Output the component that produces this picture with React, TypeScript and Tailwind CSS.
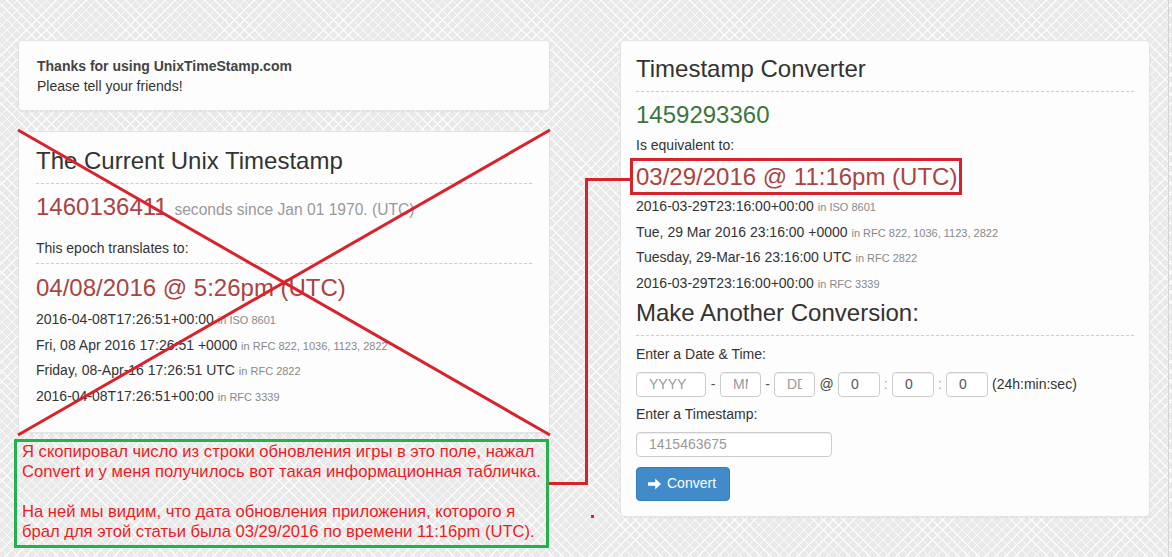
import React from "react";

const sans = "font-['Liberation_Sans',Arial,sans-serif]";

function Card({ className = "", children }: { className?: string; children: React.ReactNode }) {
  return (
    <div
      className={`rounded-[4px] border border-[#e4e4e4] bg-[#fdfdfd] shadow-[0_1px_2px_rgba(0,0,0,0.05)] ${className}`}
    >
      {children}
    </div>
  );
}

function FormatLine({ value, label }: { value: string; label: string }) {
  return (
    <div className="text-[14px] leading-[24.67px] text-[#333] whitespace-nowrap">
      {value} <span className="text-[11px] text-[#888]">in {label}</span>
    </div>
  );
}

function ArrowRight() {
  return (
    <svg width="14" height="14" viewBox="0 0 14 14" className="fill-white">
      <path d="M0 5.2h7.2V1.6L13 7l-5.8 5.4V8.8H0z" />
    </svg>
  );
}

function Field({ width, placeholder, value }: { width: string; placeholder?: string; value?: string }) {
  return (
    <input
      readOnly
      value={value}
      placeholder={placeholder}
      className={`${width} h-[25px] rounded-[4px] border border-[#ccc] bg-white px-[12px] text-[14px] text-[#555] shadow-[inset_0_1px_1px_rgba(0,0,0,0.075)] outline-none placeholder:text-[#999]`}
    />
  );
}

export default function App() {
  return (
    <div
      className={`relative h-[557px] w-[1172px] overflow-hidden bg-[#e9e9e9] [background-image:repeating-linear-gradient(45deg,transparent_0,transparent_6px,rgba(255,255,255,0.8)_6px,rgba(255,255,255,0.8)_7px),repeating-linear-gradient(-45deg,transparent_0,transparent_6px,rgba(255,255,255,0.8)_6px,rgba(255,255,255,0.8)_7px)] ${sans}`}
    >
      <div className="flex pl-[18px] pt-[40px]">
        {/* left column */}
        <div className="w-[532px]">
          <Card className="h-[71px] px-[18px] pt-[15px]">
            <div className="text-[14px] font-bold leading-[20px] text-[#444]">Thanks for using UnixTimeStamp.com</div>
            <div className="text-[14px] leading-[20px] text-[#333]">Please tell your friends!</div>
          </Card>

          <Card className="mt-[20px] h-[302px] px-[17px] pt-[16px]">
            <div className="border-b border-dashed border-[#ccc] pb-[9px] text-[24px] leading-[26px] text-[#333]">
              The Current Unix Timestamp
            </div>
            <div className="mt-[10px] whitespace-nowrap text-[24px] leading-[26px] text-[#a94442]">
              1460136411 <span className="text-[15.6px] text-[#999]">seconds since Jan 01 1970. (UTC)</span>
            </div>
            <div className="mt-[15px] border-b border-dashed border-[#ccc] pb-[5px] text-[14px] leading-[20px] text-[#333]">
              This epoch translates to:
            </div>
            <div className="mt-[11px] text-[24px] leading-[26px] text-[#a94442]">04/08/2016 @ 5:26pm (UTC)</div>
            <div className="mt-[6px]">
              <FormatLine value="2016-04-08T17:26:51+00:00" label="ISO 8601" />
              <FormatLine value="Fri, 08 Apr 2016 17:26:51 +0000" label="RFC 822, 1036, 1123, 2822" />
              <FormatLine value="Friday, 08-Apr-16 17:26:51 UTC" label="RFC 2822" />
              <FormatLine value="2016-04-08T17:26:51+00:00" label="RFC 3339" />
            </div>
          </Card>

          <div className="-ml-[4px] mt-[6px] h-[109px] w-[535px] border-[3px] border-[#22b14c] pl-[5px] text-[16.6px] leading-[20px] text-[#ed1c24] whitespace-nowrap">
            Я скопировал число из строки обновления игры в это поле, нажал
            <br />
            Convert и у меня получилось вот такая информационная табличка.
            <br />
            <br />
            На ней мы видим, что дата обновления приложения, которого я
            <br />
            брал для этой статьи была 03/29/2016 по времени 11:16pm (UTC).
          </div>
        </div>

        {/* right column */}
        <div className="ml-[70px] w-[530px]">
          <Card className="h-[477px] px-[15px] pt-[15px]">
            <div className="border-b border-dashed border-[#ccc] pb-[9px] text-[24px] leading-[26px] text-[#333]">
              Timestamp Converter
            </div>
            <div className="mt-[10px] text-[24px] leading-[26px] text-[#3c763d]">1459293360</div>
            <div className="mt-[7px] text-[14px] leading-[20px] text-[#333]">Is equivalent to:</div>
            <div className="-ml-[6px] mt-[3px] inline-block border-[3px] border-[#d8222c] pb-[2px] pl-[3px] pr-[2px] pt-[3px] text-[24px] leading-[26px] text-[#a94442] whitespace-nowrap">
              03/29/2016 @ 11:16pm (UTC)
            </div>
            <div className="-mt-[1px]">
              <FormatLine value="2016-03-29T23:16:00+00:00" label="ISO 8601" />
              <FormatLine value="Tue, 29 Mar 2016 23:16:00 +0000" label="RFC 822, 1036, 1123, 2822" />
              <FormatLine value="Tuesday, 29-Mar-16 23:16:00 UTC" label="RFC 2822" />
              <FormatLine value="2016-03-29T23:16:00+00:00" label="RFC 3339" />
            </div>
            <div className="mt-[3px] border-b border-dashed border-[#ccc] pb-[9px] text-[24px] leading-[26px] text-[#333]">
              Make Another Conversion:
            </div>
            <div className="mt-[8px] text-[14px] leading-[20px] text-[#333]">Enter a Date &amp; Time:</div>
            <div className="mt-[8px] flex items-center text-[14px] text-[#555]">
              <Field width="w-[70px]" placeholder="YYYY" />
              <span className="w-[14px] text-center">-</span>
              <Field width="w-[41px]" placeholder="MM" />
              <span className="w-[13px] text-center">-</span>
              <Field width="w-[41px]" placeholder="DD" />
              <span className="w-[23px] text-center text-[#444]">@</span>
              <Field width="w-[42px]" value="0" />
              <span className="w-[12px] text-center text-[#aaa]">:</span>
              <Field width="w-[42px]" value="0" />
              <span className="w-[12px] text-center text-[#aaa]">:</span>
              <Field width="w-[42px]" value="0" />
              <span className="ml-[4px] text-[#333]">(24h:min:sec)</span>
            </div>
            <div className="mt-[7px] text-[14px] leading-[20px] text-[#333]">Enter a Timestamp:</div>
            <div className="mt-[8px]">
              <Field width="w-[196px]" placeholder="1415463675" />
            </div>
            <button className="mt-[10px] flex h-[34px] w-[94px] items-center gap-[5px] rounded-[4px] border border-[#357ebd] bg-[#428bca] pl-[11px] text-[14px] text-white">
              <ArrowRight />
              Convert
            </button>
          </Card>
        </div>
      </div>

      {/* annotation strokes drawn over the page */}
      <svg className="pointer-events-none absolute inset-0" width="1172" height="557">
        <g stroke="#d8222c" strokeWidth="3" fill="none">
          <line x1="18" y1="130" x2="550" y2="435" />
          <line x1="550" y1="130" x2="18" y2="435" />
          <polyline points="549,483.5 586.5,483.5 586.5,179.5 630,179.5" />
        </g>
        <rect x="591" y="515" width="3" height="3" fill="#d8222c" />
        <line x1="1168.5" y1="0" x2="1168.5" y2="557" stroke="#d6d6d6" strokeWidth="1" />
      </svg>
    </div>
  );
}
